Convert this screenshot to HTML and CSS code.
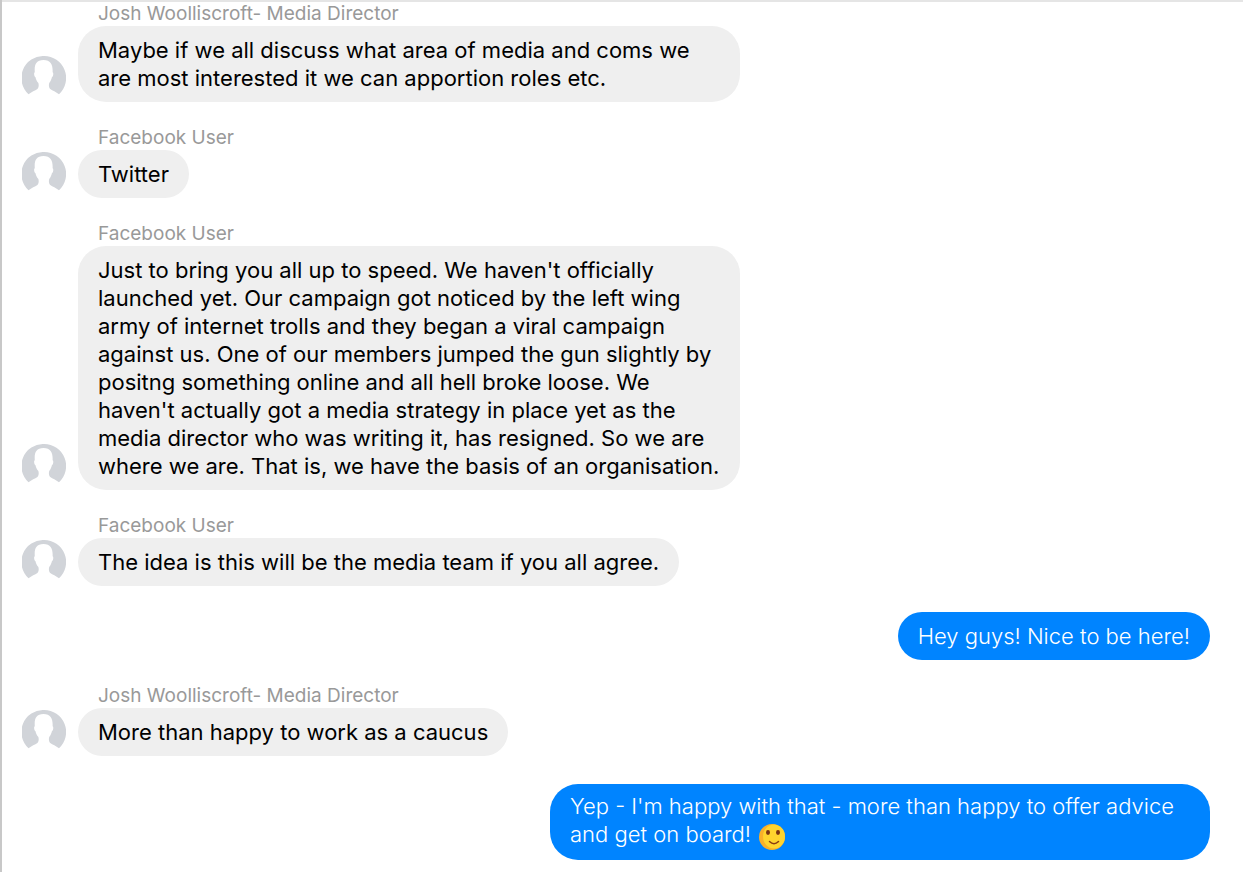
FILE: index.html
```html
<!DOCTYPE html>
<html lang="en">
<head>
<meta charset="utf-8">
<title>Media team chat</title>
<meta name="viewport" content="width=device-width, initial-scale=1">
<link rel="stylesheet" href="styles.css">
</head>
<body>
<svg class="symbols" aria-hidden="true">
  <symbol id="person" viewBox="0 0 44 44">
    <path fill="#d1d4d9" d="M22 0a22 22 0 0 1 15 38.200C34 36 30.500 34.600 28.200 33c-1.500-1.600-1.500-4-1-6 1.400-1.600 2.300-3.700 2.700-5.800 1.400-.6 1.900-4.600.7-5C31 9 29 4 21.500 4S12.200 9 12.800 16.200c-1.200.4-.7 4.400.7 5 .4 2.100 1.300 4.200 2.900 5.800.5 2 .5 4.400-1 6-2.300 1.600-5.900 3-8.900 5.200A22 22 0 0 1 22 0z"/>
  </symbol>
</svg>
<main class="thread">
  <article class="message">
    <h2 class="sender">Josh Woolliscroft- Media Director</h2>
    <div class="row">
      <svg class="avatar" role="img" aria-label="Profile"><use href="#person"/></svg>
      <p class="bubble">Maybe if we all discuss what area of media and coms we are most interested it we can apportion roles etc.</p>
    </div>
  </article>
  <article class="message">
    <h2 class="sender">Facebook User</h2>
    <div class="row">
      <svg class="avatar" role="img" aria-label="Profile"><use href="#person"/></svg>
      <p class="bubble">Twitter</p>
    </div>
  </article>
  <article class="message">
    <h2 class="sender">Facebook User</h2>
    <div class="row">
      <svg class="avatar" role="img" aria-label="Profile"><use href="#person"/></svg>
      <p class="bubble">Just to bring you all up to speed. We haven't officially launched yet. Our campaign got noticed by the left wing army of internet trolls and they began a viral campaign against us. One of our members jumped the gun slightly by positng something online and all hell broke loose. We haven't actually got a media strategy in place yet as the media director who was writing it, has resigned. So we are where we are. That is, we have the basis of an organisation.</p>
    </div>
  </article>
  <article class="message">
    <h2 class="sender">Facebook User</h2>
    <div class="row">
      <svg class="avatar" role="img" aria-label="Profile"><use href="#person"/></svg>
      <p class="bubble">The idea is this will be the media team if you all agree.</p>
    </div>
  </article>
  <article class="message own">
    <p class="bubble">Hey guys! Nice to be here!</p>
  </article>
  <article class="message">
    <h2 class="sender">Josh Woolliscroft- Media Director</h2>
    <div class="row">
      <svg class="avatar" role="img" aria-label="Profile"><use href="#person"/></svg>
      <p class="bubble">More than happy to work as a caucus</p>
    </div>
  </article>
  <article class="message own with-emoji">
    <p class="bubble">Yep - I'm happy with that - more than happy to offer advice and get on board! <svg class="emoji" viewBox="0 0 26 26" role="img" aria-label="Slightly smiling face">
      <circle cx="13" cy="13" r="13" fill="#f9b02a"/>
      <ellipse cx="15" cy="12.500" rx="11" ry="12" fill="#ffd42e"/>
      <ellipse cx="9" cy="8.500" rx="2" ry="2.400" fill="#7a3313"/>
      <ellipse cx="19" cy="8.500" rx="2" ry="2.400" fill="#7a3313"/>
      <path d="M10.500 17.500q4.500 4.500 9 0" fill="none" stroke="#8b3d12" stroke-width="1.500" stroke-linecap="round"/>
    </svg></p>
  </article>
</main>
</body>
</html>
```
FILE: styles.css
```css
* {
  box-sizing: border-box;
}

body {
  margin: 0;
  background: #fff;
  color: #000;
  font-family: Inter, Roboto, sans-serif;
  font-size: 22px;
  line-height: 28px;
}

.symbols {
  display: none;
}

.thread {
  display: flex;
  flex-direction: column;
  gap: 22px;
  min-height: 100vh;
  padding: 0 33px 12px 20px;
  border-left: 2px solid #c8c8c8;
  box-shadow: inset 0 2px #e5e5e5;
}

.sender {
  margin: 0;
  padding: 2px 0 0 76px;
  color: #999;
  font-size: 19px;
  font-weight: 400;
  line-height: 24px;
}

.row {
  display: flex;
  align-items: flex-end;
  gap: 12px;
}

.avatar {
  flex: none;
  width: 44px;
  height: 44px;
  margin-bottom: 2px;
}

.bubble {
  max-width: 662px;
  margin: 0;
  padding: 10px 20px;
  border-radius: 28px;
  background: #efefef;
}

.own {
  display: flex;
  justify-content: flex-end;
  padding-top: 4px;
}

.own .bubble {
  max-width: 660px;
  background: #0084ff;
  color: #fff;
  font-weight: 350;
}

.with-emoji {
  padding-top: 6px;
}

.with-emoji .bubble {
  padding: 8px 20px 12px;
}

.emoji {
  width: 26px;
  height: 26px;
  margin: 0 2px -3px;
  vertical-align: text-bottom;
}
```
